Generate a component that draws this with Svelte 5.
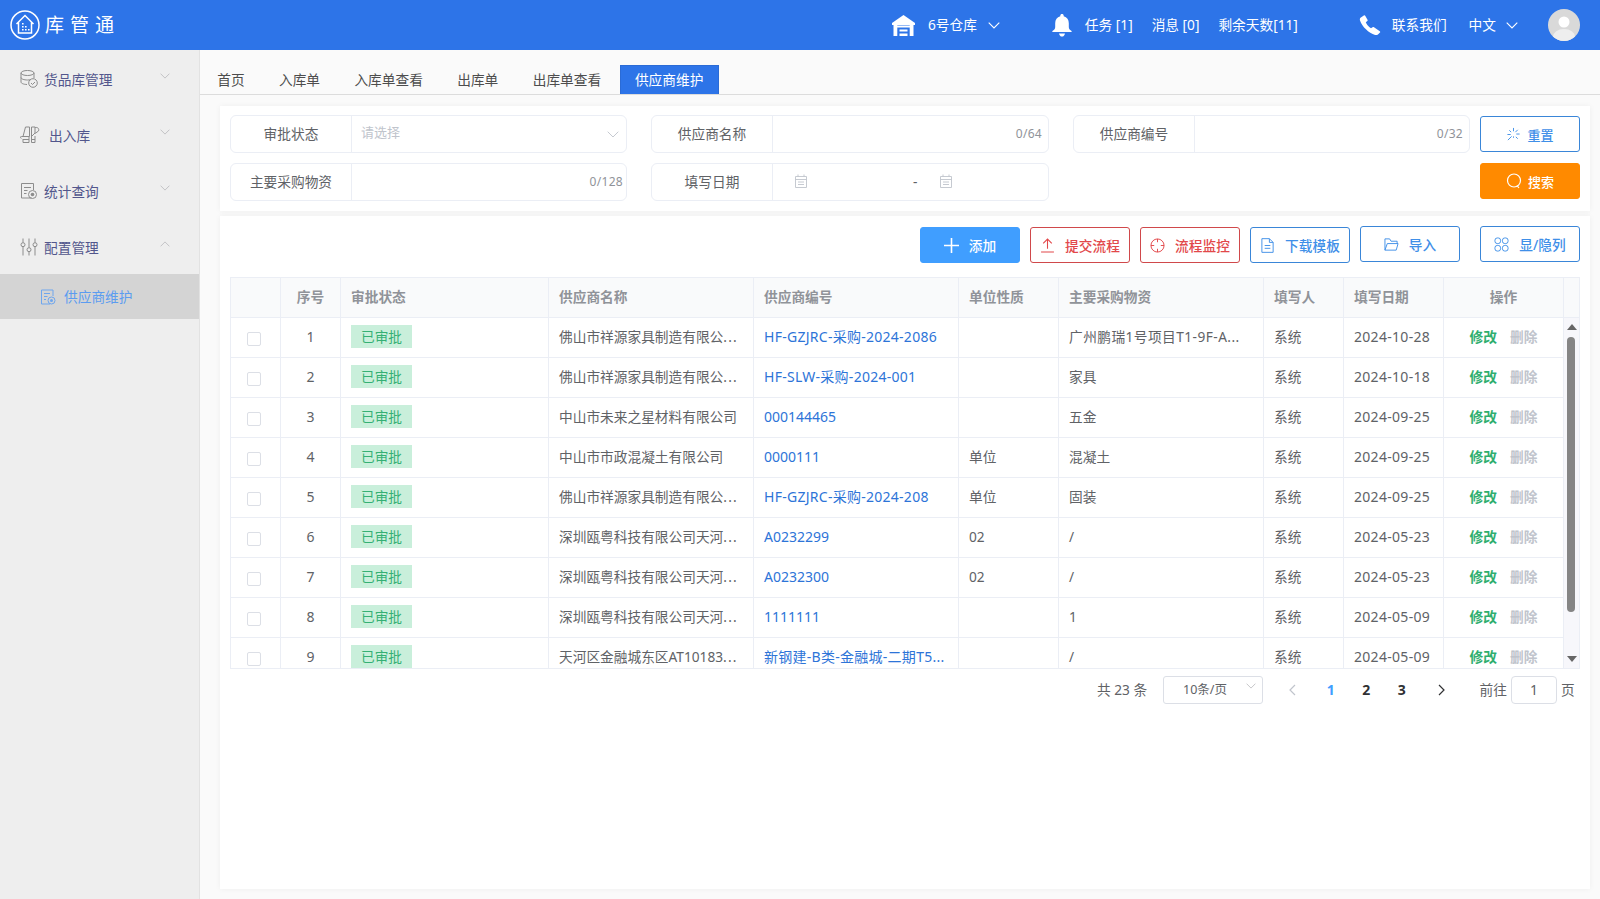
<script>
  const tabs = ['首页', '入库单', '入库单查看', '出库单', '出库单查看', '供应商维护'];
  const headers = [
    ['', ''], ['序号', 'c'], ['审批状态', ''], ['供应商名称', ''], ['供应商编号', ''],
    ['单位性质', ''], ['主要采购物资', ''], ['填写人', ''], ['填写日期', ''], ['操作', 'c']
  ];
  const rows = [
    ['佛山市祥源家具制造有限公...', 'HF-GZJRC-采购-2024-2086', '', '广州鹏瑞1号项目T1-9F-A...', '2024-10-28'],
    ['佛山市祥源家具制造有限公...', 'HF-SLW-采购-2024-001', '', '家具', '2024-10-18'],
    ['中山市未来之星材料有限公司', '000144465', '', '五金', '2024-09-25'],
    ['中山市市政混凝土有限公司', '0000111', '单位', '混凝土', '2024-09-25'],
    ['佛山市祥源家具制造有限公...', 'HF-GZJRC-采购-2024-208', '单位', '固装', '2024-09-25'],
    ['深圳瓯粤科技有限公司天河...', 'A0232299', '02', '/', '2024-05-23'],
    ['深圳瓯粤科技有限公司天河...', 'A0232300', '02', '/', '2024-05-23'],
    ['深圳瓯粤科技有限公司天河...', '1111111', '', '1', '2024-05-09'],
    ['天河区金融城东区AT10183...', '新钢建-B类-金融城-二期T5...', '', '/', '2024-05-09']
  ];
</script>

{#snippet chevron(cls)}
  <svg class={cls} viewBox="0 0 12 7"><path d="M.7.7 6 6 11.3.7" /></svg>
{/snippet}

{#snippet calendar()}
  <svg class="cal" viewBox="0 0 12 14"><path d="M.5 2.5h11v11H.5zM.5 5.5h11M3 .5v2M9 .5v2M3 8h6M3 10.5h6" /></svg>
{/snippet}

{#snippet cut(s)}
  {#if s.endsWith('...')}{s.slice(0, -3)}<span class="more">...</span>{:else}{s}{/if}
{/snippet}

<div class="app">
  <header class="top">
    <div class="logo">
      <svg class="logo-ic" viewBox="0 0 30 30">
        <circle cx="15" cy="15" r="14" />
        <path d="M6.5 14 15 5.5l8.500 8.500M8.500 12.500V23h13V12.500" />
        <path class="dots" d="M12 13h1.600v1.600H12zM12 16h1.600v1.600H12zM12 19h1.600v1.600H12zM15 16h1.600v1.600H15zM15 19h1.600v1.600H15zM18 19h1.600v1.600H18z" />
      </svg>
      <span class="logo-t">库管通</span>
    </div>
    <div class="tools">
      <svg class="i-ware" viewBox="0 0 23 21"><path d="M11.500 0 23 8v2H0V8zM1.500 10h3.800v11H1.500zM17.700 10h3.800v11h-3.800zM5 10.500h13v2H5zM7.500 14.500h8v2h-8zM7.500 18.500h8V21h-8z" /></svg>
      <span class="t-ware">6号仓库</span>
      {@render chevron('chev-w c1')}
      <svg class="i-bell" viewBox="0 0 20 23"><path d="M10 0c1 0 1.700.7 1.700 1.700v.6c3.300.8 5.100 3.500 5.100 7V13c0 1.800.9 2.900 2.400 3.700.6.300.8 1.400-.3 1.400H1.100C0 18.100.2 17 .8 16.700 2.300 15.900 3.200 14.800 3.200 13V9.300c0-3.500 1.800-6.200 5.100-7v-.6C8.300.7 9 0 10 0zM7 19.400h6c-.4 2-1.500 3.200-3 3.200s-2.600-1.200-3-3.200z" /></svg>
      <span class="t-task">任务 [1]</span>
      <span class="t-msg">消息 [0]</span>
      <span class="t-days">剩余天数[11]</span>
      <svg class="i-phone" viewBox="0 0 22 20"><path d="M1.500 2.800 4.800.4c.5-.4 1.100-.3 1.400.3l2.300 4c.3.500.2 1-.2 1.400L6.800 7.300c1 2.400 2.600 4.500 5.200 6l1.600-1.100c.4-.3 1-.2 1.400.1l5.800 3.900c.5.400.6 1 .2 1.400l-1.800 1.700c-.9.800-2 1-3.100.6C9.500 17.600 3.400 12 1 5.400.7 4.400.8 3.400 1.500 2.800z" /></svg>
      <span class="t-contact">联系我们</span>
      <span class="t-lang">中文</span>
      {@render chevron('chev-w c2')}
      <svg class="avatar" viewBox="0 0 32 32">
        <defs><clipPath id="av"><circle cx="16" cy="16" r="16" /></clipPath></defs>
        <g clip-path="url(#av)">
          <rect width="32" height="32" fill="#d9d9d9" />
          <circle cx="16" cy="13" r="5.500" fill="#fff" />
          <ellipse cx="16" cy="28" rx="11" ry="8" fill="#eee" />
        </g>
      </svg>
    </div>
  </header>

  <div class="body">
    <aside class="side">
      <div class="item">
        <svg class="m-ic" viewBox="0 0 18 18"><ellipse cx="7.500" cy="3" rx="6.500" ry="2.500" /><path d="M1 3v9c0 1.300 2.500 2.400 6 2.500M1 7.500c0 1.400 2.900 2.500 6.500 2.500 1.200 0 2.300-.1 3.200-.4M14 3v5M1 12" /><circle cx="13" cy="13" r="4.300" /><path d="m11 13 1.500 1.500L15 12" /></svg>
        <span>货品库管理</span>
        {@render chevron('chev')}
      </div>
      <div class="item">
        <svg class="m-ic io" viewBox="0 0 20 18"><path d="M5.500 1h4v9.500H1.500c-1 0-1 .3-1 1 0 .5.500.8 1 .8M11.500 1h3.500v6L12 10h-.5zM15 1.500c2.500-.5 4.500 1 3.500 3.500L15 7.500M3 10.500 5.500 1M3 13v3.500h6v-6M3 13.500h6M11.500 10v6.500H15V10M11.500 13.500H15" /></svg>
        <span class="shift">出入库</span>
        {@render chevron('chev')}
      </div>
      <div class="item">
        <svg class="m-ic" viewBox="0 0 18 18"><path d="M11.500 16H1.500V1.500h12V8M4 5.500h7M4 8.500h3.500M4 11.500h2.500" /><circle cx="12.500" cy="12.500" r="4" /><circle class="fill" cx="12.500" cy="12.500" r="1.800" /></svg>
        <span>统计查询</span>
        {@render chevron('chev')}
      </div>
      <div class="item">
        <svg class="m-ic" viewBox="0 0 18 18"><path d="M3 .5v4M3 9v8.500M9 .5v9M9 14v3.500M15 .5v4M15 9v8.500" /><circle cx="3" cy="6.700" r="2" /><circle cx="9" cy="11.700" r="2" /><circle cx="15" cy="6.700" r="2" /></svg>
        <span>配置管理</span>
        {@render chevron('chev up')}
      </div>
      <div class="sub">
        <svg class="s-ic" viewBox="0 0 16 16"><path d="M10 15H1.500V1H13v6M4 4.500h6M4 7.500h3.500M4 10.500h2" /><circle cx="11.500" cy="11.500" r="3.500" /><circle class="fill" cx="11.500" cy="11.500" r="1.500" /></svg>
        <span>供应商维护</span>
      </div>
    </aside>

    <main class="main">
      <nav class="tabs">
        {#each tabs as t, i}
          <span class="tab" class:active={i === tabs.length - 1}>{t}</span>
        {/each}
      </nav>

      <section class="card filter">
        <div class="fields">
          <div class="field">
            <span class="lab">审批状态</span>
            <span class="val ph">请选择</span>
            {@render chevron('chev sel')}
          </div>
          <div class="field"><span class="lab">供应商名称</span><span class="val"></span><span class="count">0/64</span></div>
          <div class="field"><span class="lab">供应商编号</span><span class="val"></span><span class="count">0/32</span></div>
          <div class="field"><span class="lab">主要采购物资</span><span class="val"></span><span class="count wide">0/128</span></div>
          <div class="field">
            <span class="lab">填写日期</span>
            <span class="dates">
              {@render calendar()}
              <span class="dash">-</span>
              {@render calendar()}
            </span>
          </div>
        </div>
        <div class="fbtns">
          <button class="btn blue">
            <svg class="b-ic" viewBox="0 0 16 16"><path d="M8 1v3.500M8 10v1.500M14.500 7.500H11M5 8H1.500M12.500 3 10 5.500M6 10l-4 4M12.500 12.500 10.500 10.500M5.500 5.500 3.500 3.500" /></svg>
            重置
          </button>
          <button class="btn orange">
            <svg class="b-ic" viewBox="0 0 16 16"><circle cx="8" cy="7.500" r="6.500" /><path d="m11 12.500 2 2.500" /></svg>
            搜索
          </button>
        </div>
      </section>

      <section class="card list">
        <div class="toolbar">
          <button class="btn primary down">
            <svg class="b-ic plus" viewBox="0 0 14 14"><path d="M7 0v14M0 7h14" /></svg>
            添加
          </button>
          <button class="btn red down">
            <svg class="b-ic" viewBox="0 0 14 14"><path d="M7 10V1.500M3 5l4-4 4 4M1 13h12" /></svg>
            提交流程
          </button>
          <button class="btn red down">
            <svg class="b-ic" viewBox="0 0 16 16"><circle cx="8" cy="8" r="7" /><path d="M8 1v3.500M8 11.500V15M1 8h3.500M11.500 8H15" /></svg>
            流程监控
          </button>
          <button class="btn blue down">
            <svg class="b-ic" viewBox="0 0 14 16"><path d="M1 .7h8l4 4v10.600H1zM9 .7v4h4M4 8h6M4 11h6" /></svg>
            下载模板
          </button>
          <button class="btn blue">
            <svg class="b-ic" viewBox="0 0 16 14"><path d="M1 13V1h5l1.500 2.500H14V6M1 13h12l2-7H3.500L1 13z" /></svg>
            导入
          </button>
          <button class="btn blue last">
            <svg class="b-ic" viewBox="0 0 16 16"><rect x="1" y="1" width="6" height="6" rx="2.500" /><rect x="9" y="1" width="6" height="6" rx="2.500" /><rect x="1" y="9" width="6" height="6" rx="2.500" /><rect x="9" y="9" width="6" height="6" rx="2.500" /></svg>
            显/隐列
          </button>
        </div>

        <div class="tbl">
          <div class="clip">
            <table>
              <colgroup>
                <col class="w50" /><col class="w60" /><col class="w208" /><col class="w205" /><col class="w205" />
                <col class="w100" /><col class="w205" /><col class="w80" /><col class="w100" /><col class="w120" />
              </colgroup>
              <thead>
                <tr>{#each headers as h}<th class={h[1]}>{h[0]}</th>{/each}</tr>
              </thead>
              <tbody>
                {#each rows as r, i}
                  <tr>
                    <td class="c lat"><span class="check"></span></td>
                    <td class="c lat">{i + 1}</td>
                    <td><span class="tag">已审批</span></td>
                    <td><div class="ell">{@render cut(r[0])}</div></td>
                    <td><div class="ell link" class:hy={r[1].includes('-')}>{@render cut(r[1])}</div></td>
                    <td>{r[2]}</td>
                    <td><div class="ell" class:hy2={r[3].includes('-')}>{@render cut(r[3])}</div></td>
                    <td>系统</td>
                    <td class="date">{r[4]}</td>
                    <td class="c ops"><b class="edit">修改</b><b class="del">删除</b></td>
                  </tr>
                {/each}
              </tbody>
            </table>
          </div>
          <div class="sb">
            <div class="sb-head"></div>
            <div class="sb-lane">
              <svg class="arr" viewBox="0 0 10 6"><path d="M5 0l5 6H0z" /></svg>
              <div class="thumb"></div>
              <svg class="arr bottom" viewBox="0 0 10 6"><path d="M0 0h10L5 6z" /></svg>
            </div>
          </div>
        </div>

        <div class="pager">
          <span class="total">共 23 条</span>
          <span class="size">10条/页{@render chevron('chev psel')}</span>
          <svg class="pa dim" viewBox="0 0 7 12"><path d="M6 1 1 6l5 5" /></svg>
          <span class="pn on">1</span>
          <span class="pn">2</span>
          <span class="pn">3</span>
          <svg class="pa nx" viewBox="0 0 7 12"><path d="m1 1 5 5-5 5" /></svg>
          <span class="goto">前往</span>
          <span class="pin">1</span>
          <span class="ye">页</span>
        </div>
      </section>
    </main>
  </div>
</div>

<style>
  :global(body) { margin: 0; }
  .app {
    height: 899px; display: flex; flex-direction: column; overflow: hidden;
    font: 13.7px/1.4 "Noto Sans", "Noto Sans CJK SC", sans-serif; color: #606266; background: #fafafa;
  }
  svg { display: block; flex: none; fill: none; stroke: currentColor; }

  .top { height: 50px; flex: none; background: #2d74e8; color: #fff; display: flex; align-items: center; justify-content: space-between; padding: 0 20px 0 10px; }
  .logo { display: flex; align-items: center; }
  .logo-ic { width: 30px; height: 30px; stroke-width: 1.5; }
  .dots { fill: #fff; stroke: none; }
  .logo-t { margin-left: 5px; font-size: 19px; letter-spacing: 6px; line-height: 28px; }
  .tools { display: flex; align-items: center; }
  .i-ware { width: 23px; height: 21px; fill: #fff; stroke: none; margin-right: 13px; }
  .chev-w { width: 12px; height: 7px; stroke-width: 1.1; }
  .c1 { margin: 0 52px 0 11px; }
  .i-bell { width: 20px; height: 23px; fill: #fff; stroke: none; margin-right: 13px; }
  .t-task, .t-msg { margin-right: 19px; }
  .t-days { margin-right: 61px; }
  .i-phone { width: 22px; height: 20px; fill: #fff; stroke: none; margin-right: 11px; }
  .t-contact { margin-right: 22px; }
  .c2 { margin: 0 30px 0 10px; }
  .avatar { width: 32px; height: 32px; stroke: none; }

  .body { flex: 1; display: flex; min-height: 0; }
  .side { width: 199px; flex: none; background: #eee; border-right: 1px solid #e2e2e2; }
  .item { height: 56px; box-sizing: border-box; padding: 4px 29px 0 20px; display: flex; align-items: center; color: #52568c; }
  .m-ic { width: 18px; height: 18px; margin: -2px 6px 0 0; color: #8c8c8c; stroke-width: 1; }
  .io { width: 20px; }
  .fill { fill: currentColor; stroke: none; }
  .shift { margin-left: 3px; }
  .item span { flex: 1; }
  .chev { width: 10px; height: 6px; color: #b4b4b8; stroke-width: .9; }
  .item .chev { margin-top: -8px; }
  .up { transform: rotate(180deg); }
  .sub { height: 45px; background: #d4d4d4; display: flex; align-items: center; padding-left: 40px; color: #5b9cf0; }
  .s-ic { width: 16px; height: 16px; margin-right: 8px; stroke-width: 1; color: #6ea6ee; }

  .main { flex: 1; min-width: 0; }
  .tabs { height: 45px; box-sizing: border-box; border-bottom: 1px solid #dcdcdc; display: flex; align-items: flex-end; }
  .tab { height: 29px; line-height: 29px; padding: 0 17.2px; color: #4d4d4d; }
  .tab.active { background: #2d74e8; color: #fff; padding: 0; margin-left: 1.3px; width: 99px; text-align: center; box-sizing: border-box; border: 1px solid #2a6bd6; border-bottom: 0; line-height: 28px; white-space: nowrap; }

  .card { margin: 0 10px 0 20px; background: #fff; box-sizing: border-box; box-shadow: 0 0 6px rgba(0, 0, 0, .05); }
  .filter { margin-top: 11px; height: 105px; padding: 9px 10px; display: flex; }
  .fields { width: 1240px; display: grid; grid-template-columns: 397px 398px 397px; column-gap: 24px; row-gap: 10px; align-content: start; }
  .field { height: 38px; box-sizing: border-box; border: 1px solid #ebeef5; border-radius: 6px; display: flex; align-items: center; }
  .lab { width: 120px; flex: none; height: 100%; display: flex; align-items: center; justify-content: center; border-right: 1px solid #ebeef5; color: #606266; }
  .val { flex: 1; padding-left: 9px; }
  .ph { color: #c0c4cc; font-size: 13px; margin-top: -3px; }
  .sel { margin-right: 7px; width: 12px; height: 7px; color: #c0c4cc; }
  .count { color: #909399; font-size: 12px; letter-spacing: .3px; margin-right: 6px; }
  .count.wide { margin-right: 3px; }
  .dates { flex: 1; display: flex; align-items: center; padding-left: 22px; }
  .cal { width: 12px; height: 14px; color: #c0c4cc; stroke-width: .9; margin-top: -2px; }
  .dash { width: 133px; padding-left: 106px; box-sizing: border-box; color: #606266; }
  .fbtns { width: 100px; margin-left: 10px; display: flex; flex-direction: column; gap: 11px; padding-top: 1px; }

  .btn {
    width: 100px; height: 36px; flex: none; box-sizing: border-box; border-radius: 3px; background: #fff; padding: 2px 0 0;
    font: 500 13.7px/1 "Noto Sans", "Noto Sans CJK SC", sans-serif;
    display: flex; align-items: center; justify-content: center; gap: 10px;
  }
  .fbtns .btn { font-size: 13px; gap: 6px; }
  .b-ic { width: 15px; height: 15px; stroke-width: 1; margin-top: -2px; }
  .blue { border: 1px solid #3a86d8; color: #3f8fe8; }
  .orange { border: 1px solid #ff8a00; background: #ff8a00; color: #fff; }
  .orange .b-ic { width: 16px; height: 16px; stroke-width: 1.2; }
  .primary { border: 1px solid #409eff; background: #409eff; color: #fff; }
  .plus { stroke-width: 1.500; }
  .red { border: 1px solid #d0494b; color: #e2484a; }

  .list { margin-top: 5px; height: 673px; padding: 10px; }
  .toolbar { height: 51px; display: flex; justify-content: flex-end; gap: 10px; align-items: flex-start; }
  .down { margin-top: 1px; }
  .last { margin-left: 10px; }

  .tbl { display: flex; height: 392px; box-sizing: border-box; border: 1px solid #ebeef5; }
  .clip { width: 1333px; flex: none; overflow: hidden; }
  table { width: 1333px; table-layout: fixed; border-collapse: separate; border-spacing: 0; }
  .w50 { width: 50px; } .w60 { width: 60px; } .w208 { width: 208px; } .w205 { width: 205px; }
  .w100 { width: 100px; } .w80 { width: 80px; } .w120 { width: 120px; }
  th, td { height: 40px; box-sizing: border-box; padding: 0 10px 2px; border-right: 1px solid #ebeef5; border-bottom: 1px solid #ebeef5; text-align: left; font-weight: 400; }
  th { background: #f9fafb; color: #909399; font-weight: 700; }
  .c { text-align: center; }
  .lat { font-size: 14px; }
  .ell { white-space: nowrap; }
  .more { letter-spacing: 1.2px; }
  .link { color: #2d74d8; font-size: 14px; }
  .link .more { letter-spacing: .27px; }
  .hy { letter-spacing: .27px; }
  .hy2 { letter-spacing: .45px; }
  .hy2 .more { letter-spacing: .45px; }
  .date { font-size: 14px; letter-spacing: .3px; white-space: nowrap; }
  .check { display: block; width: 14px; height: 14px; box-sizing: border-box; border: 1px solid #dcdfe6; border-radius: 2px; margin: 4px 0 0 6px; background: #fff; }
  .tag { display: inline-block; width: 61px; height: 23px; line-height: 23px; text-align: center; background: #c9efdb; color: #35b074; vertical-align: middle; }
  .ops { padding: 0 0 2px; }
  .edit { color: #2fae6e; font-weight: 700; margin-right: 13px; }
  .del { color: #c0c4cc; font-weight: 700; }

  .sb { flex: 1; display: flex; flex-direction: column; }
  .sb-head { height: 40px; flex: none; background: #f9fafb; border-bottom: 1px solid #ebeef5; box-sizing: border-box; }
  .sb-lane { flex: 1; background: #f7f7fb; display: flex; flex-direction: column; align-items: center; padding: 6px 0; box-sizing: border-box; }
  .arr { width: 10px; height: 6px; fill: #666; stroke: none; }
  .bottom { margin-top: auto; }
  .thumb { width: 8px; height: 275px; background: #858585; border-radius: 4px; margin: 7px 2px 0 0; }

  .pager { height: 42px; display: flex; align-items: center; color: #606266; padding-left: 867px; }
  .total { width: 66px; flex: none; white-space: nowrap; }
  .size { width: 100px; height: 28px; flex: none; box-sizing: border-box; border: 1px solid #dcdfe6; border-radius: 3px; padding-left: 19px; font-size: 12.5px; line-height: 26px; position: relative; white-space: nowrap; }
  .psel { position: absolute; right: 6px; top: 6px; }
  .pa { width: 7px; height: 12px; stroke: #303133; stroke-width: 1.2; margin: 0 16px; }
  .pa.dim { stroke: #c0c4cc; margin: 0 17px 0 26px; }
  .pa.nx { margin: 0 16px 0 18px; }
  .pn { width: 35.5px; text-align: center; font-size: 14px; font-weight: 700; color: #303133; }
  .pn.on { color: #409eff; }
  .goto { margin-left: 19px; white-space: nowrap; }
  .pin { width: 46px; height: 28px; box-sizing: border-box; border: 1px solid #dcdfe6; border-radius: 4px; margin: 0 4px 0 4px; text-align: center; font-size: 14px; line-height: 26px; }
  .ye { white-space: nowrap; }
</style>
